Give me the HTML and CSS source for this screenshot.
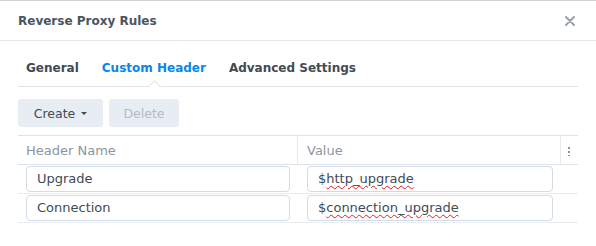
FILE: index.html
```html
<!DOCTYPE html>
<html lang="en">
<head>
  <meta charset="UTF-8" />
  <title>Reverse Proxy Rules</title>
  <link rel="stylesheet" href="styles.css">
</head>
<body>
  <div class="dialog">
    <div class="dialog-head">
      <span class="title">Reverse Proxy Rules</span>
      <svg class="close" width="10" height="10" viewBox="0 0 10 10">
        <path d="M1 1 L9 9 M9 1 L1 9" stroke="#98a1aa" stroke-width="2" stroke-linecap="round"/>
      </svg>
    </div>
    <div class="dialog-body">
      <div class="tabs">
        <span class="tab">General</span>
        <span class="tab active">Custom Header</span>
        <span class="tab">Advanced Settings</span>
      </div>

      <div class="toolbar">
        <button class="btn">Create <span class="caret"></span></button>
        <button class="btn" disabled>Delete</button>
      </div>

      <div class="grid">
        <div class="row head">
          <div class="cell name">Header Name</div>
          <div class="cell value">Value</div>
          <div class="cell more"><span class="dots"></span></div>
        </div>
        <div class="row">
          <div class="cell name"><div class="input">Upgrade</div></div>
          <div class="cell value"><div class="input">$<span class="typo">http_upgrade</span></div></div>
          <div class="cell more"></div>
        </div>
        <div class="row">
          <div class="cell name"><div class="input">Connection</div></div>
          <div class="cell value"><div class="input">$<span class="typo">connection_upgrade</span></div></div>
          <div class="cell more"></div>
        </div>
      </div>
    </div>
  </div>
</body>
</html>
```

FILE: styles.css
```css
* {
  margin: 0;
  padding: 0;
  box-sizing: border-box;
}

body {
  background: #fff;
  font-family: "DejaVu Sans", Verdana, sans-serif;
  color: #414b55;
}

.dialog {
  width: 596px;
  height: 246px;
  border-top: 1px solid #cfd3d7;
}

.dialog-head {
  height: 40px;
  border-bottom: 1px solid #e2e7ec;
  display: flex;
  align-items: center;
  justify-content: space-between;
  padding: 0 21px 0 18px;
}

.title {
  font-size: 12px;
  font-weight: bold;
  color: #4b5560;
}

.dialog-body {
  padding: 0 18px;
}

.tabs {
  height: 46px;
  border-bottom: 1px solid #dde3ea;
  display: flex;
  gap: 23px;
  padding: 0 0 0 8px;
}

.tab {
  font-size: 12px;
  font-weight: bold;
  color: #414b55;
  position: relative;
  height: 45px;
  line-height: 14px;
  padding-top: 20px;
}

.tab.active {
  color: #0a86e6;
}

.tab.active::after {
  content: "";
  position: absolute;
  left: 50%;
  bottom: -5px;
  width: 8px;
  height: 8px;
  margin-left: -4px;
  background: #fff;
  border-left: 1px solid #dde3ea;
  border-top: 1px solid #dde3ea;
  transform: rotate(45deg);
}

.toolbar {
  display: flex;
  gap: 6px;
  margin-top: 12px;
}

.btn {
  height: 28px;
  padding: 0 14px;
  border: none;
  border-radius: 3px;
  background: #e8edf3;
  font-family: "DejaVu Sans", Verdana, sans-serif;
  font-size: 12.5px;
  color: #414b55;
}

.btn:first-child {
  width: 85px;
}

.btn[disabled] {
  width: 70px;
  color: #b3bcc5;
}

.caret {
  display: inline-block;
  vertical-align: middle;
  margin: -2px 0 0 2px;
  border-left: 3px solid transparent;
  border-right: 3px solid transparent;
  border-top: 3px solid #414b55;
}

.grid {
  margin-top: 8px;
  border-top: 1px solid #dde3ea;
}

.row {
  display: flex;
  height: 29px;
  border-bottom: 1px solid #e6ebf0;
}

.row.head {
  height: 29px;
  border-bottom: 1px solid #dde3ea;
}

.cell {
  display: flex;
  align-items: center;
}

.cell.name {
  width: 280px;
  padding: 0 8px;
}

.cell.value {
  width: 263px;
  padding: 0 8px 0 9px;
}

.cell.more {
  width: 17px;
  justify-content: center;
}

.row.head .cell {
  font-size: 13px;
  color: #8a96a3;
  padding-top: 1px;
}

.row.head .cell.name,
.row.head .cell.value {
  border-right: 1px solid #e6ebf0;
}

.row.head .cell.more {
  width: 16px;
}

.dots {
  width: 2px;
  height: 10px;
  background: radial-gradient(circle, #8a96a3 1px, transparent 1.2px) 0 0 / 2px 4px;
}

.input {
  width: 100%;
  height: 26px;
  border: 1px solid #d3dce5;
  border-radius: 4px;
  padding: 0 10px;
  font-size: 13px;
  line-height: 24px;
  color: #414b55;
}

.typo {
  text-decoration: underline wavy #e02020;
  text-decoration-thickness: 1px;
  text-underline-offset: 2px;
}
```
